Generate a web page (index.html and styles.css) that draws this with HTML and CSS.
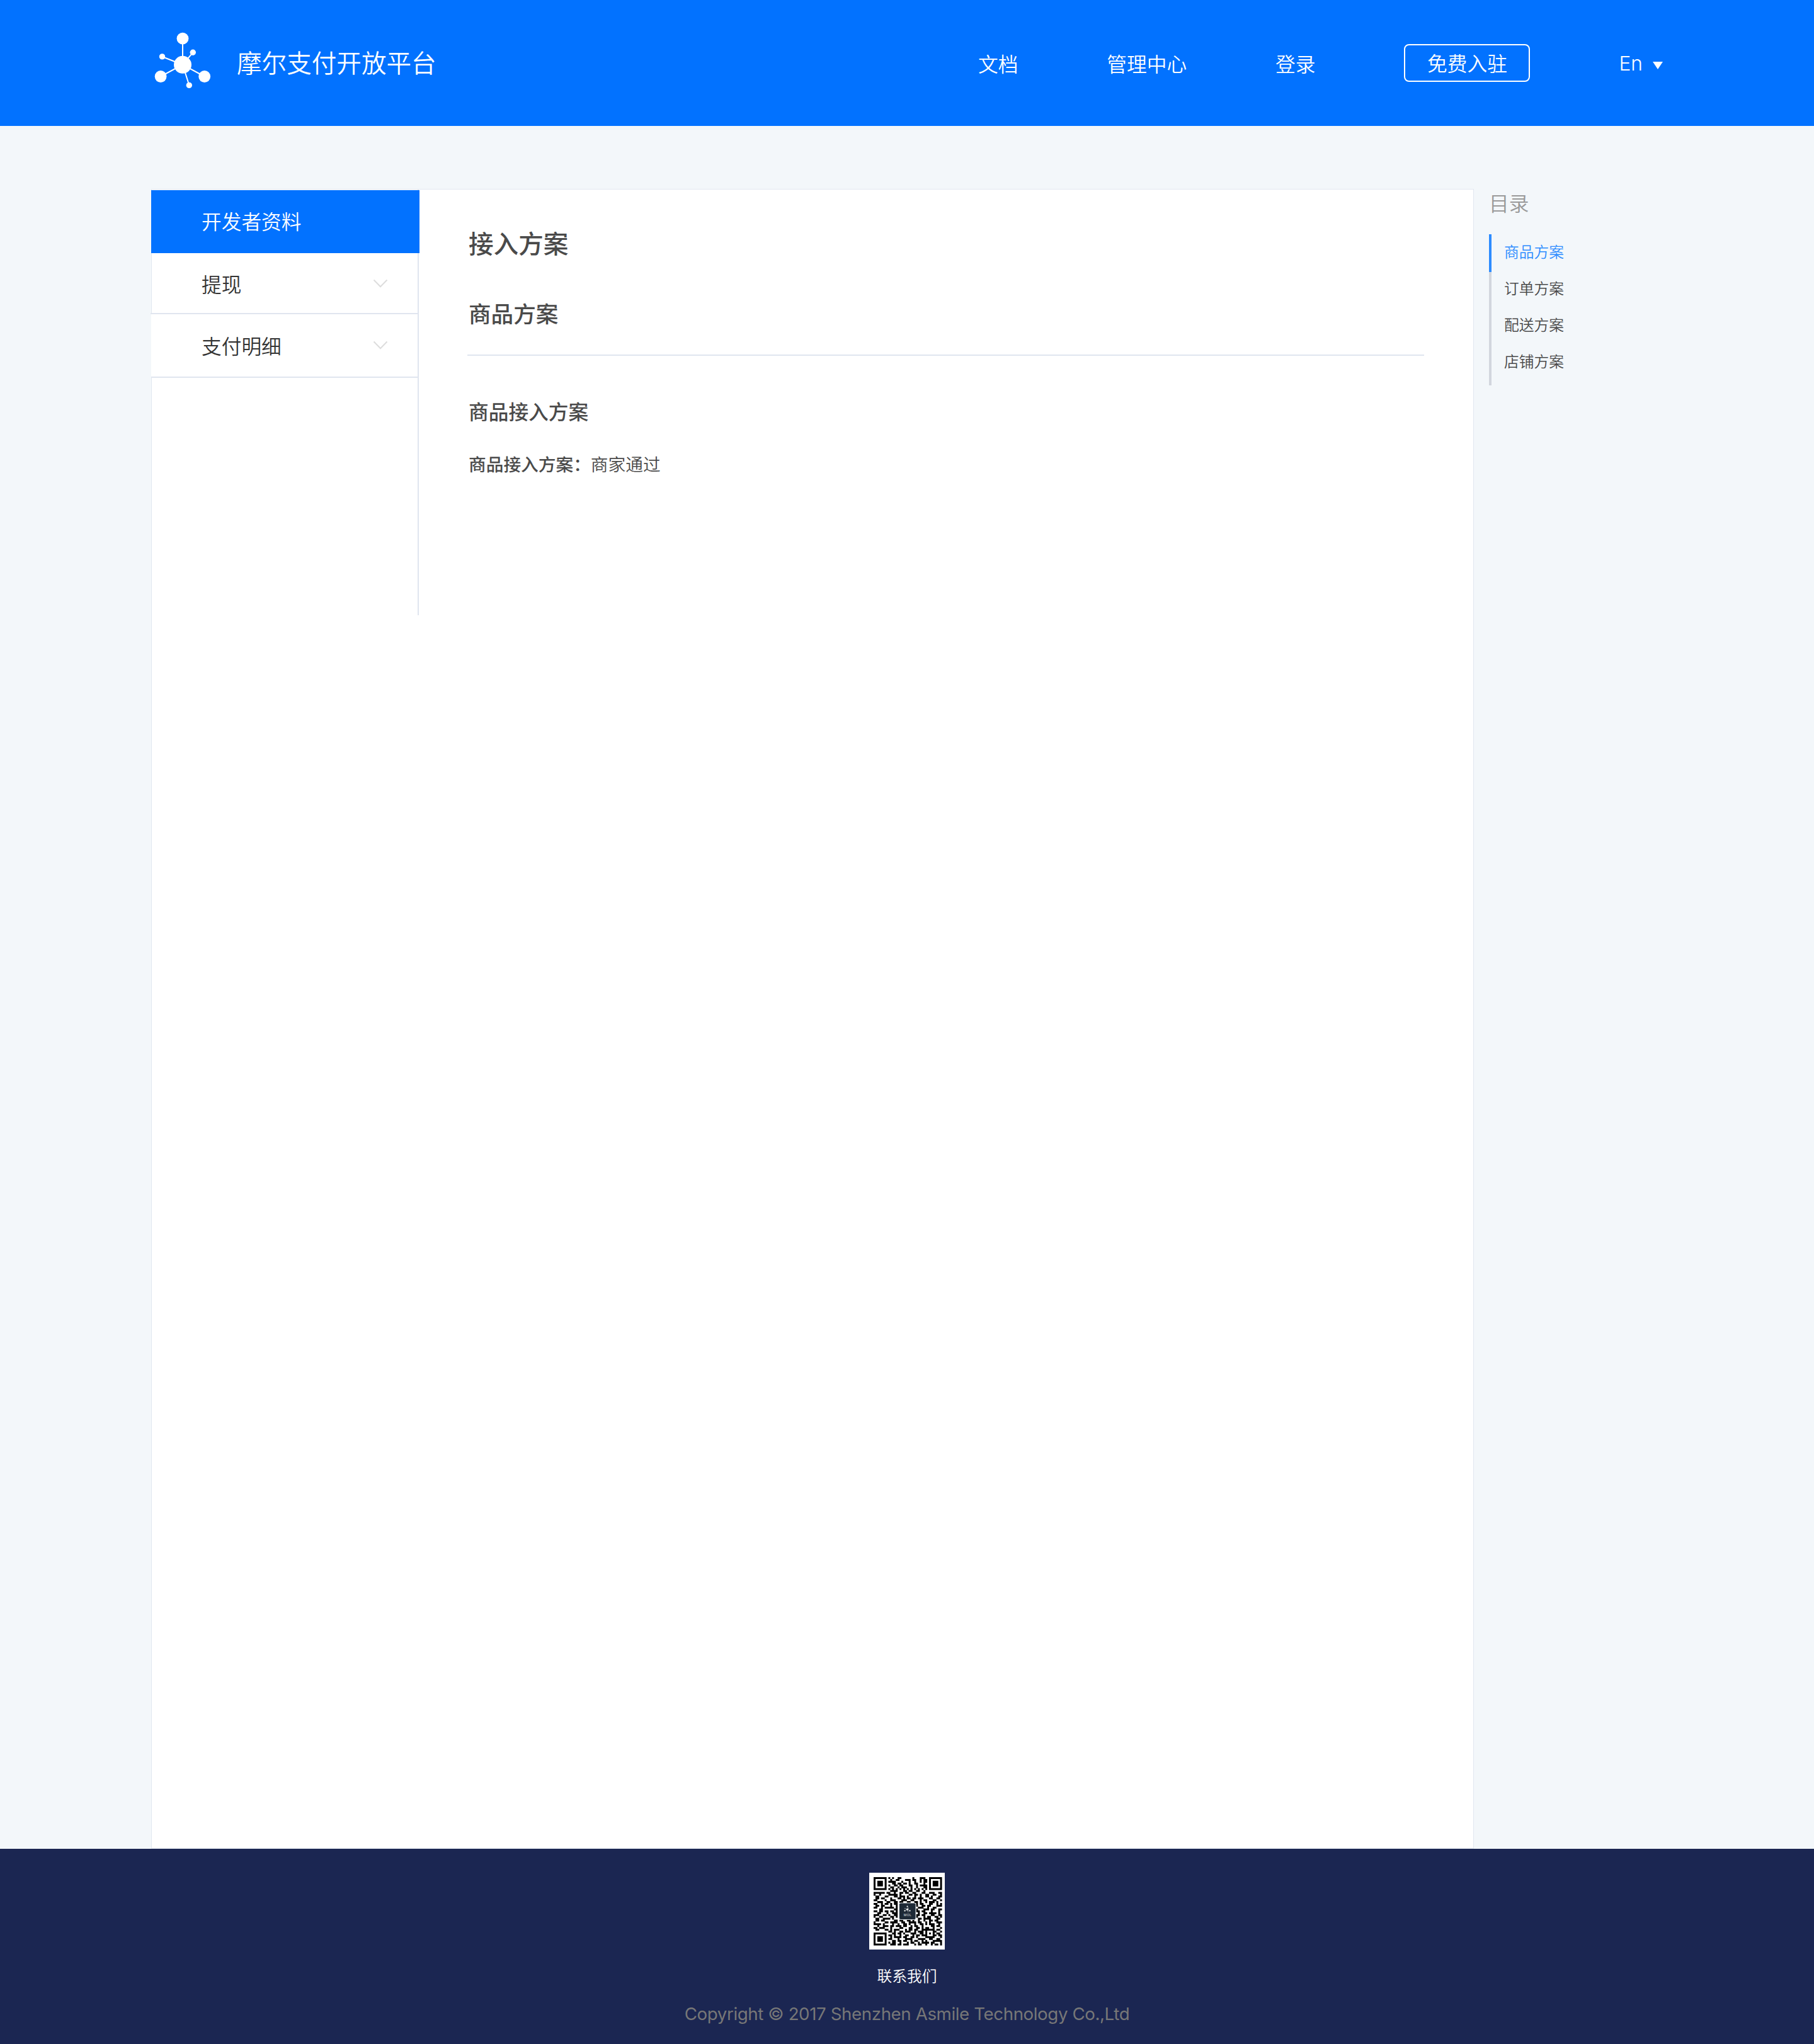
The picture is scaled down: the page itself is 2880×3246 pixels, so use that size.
FILE: index.html
```html
<!DOCTYPE html>
<html lang="zh-CN">
<head>
<meta charset="utf-8">
<title>摩尔支付开放平台</title>
<link rel="stylesheet" href="styles.css">
</head>
<body>
<header class="header">
  <a class="brand">
    <svg class="brand-logo" width="100" height="100" viewBox="0 0 100 100" fill="#fff" stroke="#fff" stroke-width="2">
      <g id="molecule"><path d="M50 52.7V11M50 52.7 17.5 40M50 52.7 66.3 33.3M50 52.7 15 71.5M50 52.7 84.7 71.5M50 52.7 60.3 85.3"/>
      <g stroke="none"><circle cx="50" cy="52.8" r="14"/><circle cx="50" cy="11.2" r="9.4"/><circle cx="17.5" cy="39.9" r="4.7"/><circle cx="66.3" cy="33.3" r="4.7"/><circle cx="15.1" cy="71.5" r="9.4"/><circle cx="84.7" cy="71.5" r="9.4"/><circle cx="60.3" cy="85.4" r="4.7"/></g></g>
    </svg>
    <span class="brand-name">摩尔支付开放平台</span>
  </a>
  <nav class="nav">
    <a>文档</a>
    <a>管理中心</a>
    <a>登录</a>
    <a class="join">免费入驻</a>
    <a class="lang">En<i class="caret"></i></a>
  </nav>
</header>
<main class="main">
  <div class="panel">
    <aside class="side">
      <div class="side-title">开发者资料</div>
      <div class="side-item">提现<svg class="chev" width="24" height="14" viewBox="0 0 24 14"><path d="M1.5 1.5 12 12.2 22.5 1.5"/></svg></div>
      <div class="side-item tall">支付明细<svg class="chev" width="24" height="14" viewBox="0 0 24 14"><path d="M1.5 1.5 12 12.2 22.5 1.5"/></svg></div>
    </aside>
    <article class="doc">
      <h1>接入方案</h1>
      <h2>商品方案</h2>
      <h3>商品接入方案</h3>
      <p><b>商品接入方案：</b>商家通过</p>
    </article>
  </div>
  <aside class="toc">
    <div class="toc-title">目录</div>
    <ul class="toc-list">
      <li class="active">商品方案</li>
      <li>订单方案</li>
      <li>配送方案</li>
      <li>店铺方案</li>
    </ul>
  </aside>
</main>
<footer class="footer">
  <svg class="qr" width="120" height="122" viewBox="0 0 120 122">
    <rect width="120" height="122" fill="#fff"/>
    <path id="modules" fill="#000" transform="translate(7 7) scale(2.932)"/>
    <rect x="47.5" y="48" width="26.5" height="26.5" rx="2.5" fill="#1d2936" stroke="#dfe4e6"/>
    <use href="#molecule" fill="#fff" stroke="#fff" stroke-width="3" transform="translate(54.8 52.2) scale(.115)"/>
    <text x="61" y="69" class="qr-label">MOL</text>
  </svg>
  <div class="contact">联系我们</div>
  <div class="copy">Copyright © 2017 Shenzhen Asmile Technology Co.,Ltd</div>
</footer>
<script src="qr.js"></script>
</body>
</html>
```
FILE: qr.js
```js
// One string per row of the code, "#" is a dark module.
const rows = [
  "#######.#.#..##......#...###..#######",
  "#.....#..#..##...###.##..#.##.#.....#",
  "#.###.#.####...#...#..#..#.##.#.###.#",
  "#.###.#...##.##.##.#..##...#..#.###.#",
  "#.###.#.#..##.##...##..#.####.#.###.#",
  "#.....#..##..#.###..#..#...##.#.....#",
  "#######.#.#.#.#.#.#.#.#.#.#.#.#######",
  ".........####...##.##..##..#.........",
  "######.##..#..##.##..##...##..###..##",
  "#..#....#####.#....##.##.#..##..##..#",
  ".##...##...##.###.#...#..#..##.#...##",
  ".##.##...#...##.#.##.##.###...##..##.",
  "##....#..###...###..##...#.##...##..#",
  "..###..##..##.##..##..##.#..#.###.#..",
  "##..#.##.#.##..........#.##...##..#.#",
  ".##.##...#..#..........#..##.##...###",
  "##..#.#####.#...........###..#..##...",
  "...##......##..........#...###.##..##",
  "##.##.##.##.#..........##.##...#...#.",
  "..##...#..###...........#..##.####.#.",
  "###..##.#..##..........##.##...##..##",
  "#..##....##.#..........#...#.##..##.#",
  ".##..####.#.............##.####...##.",
  ".##.##.....##.##..##.#..#..#..##.##..",
  "#.....##.####..##..####.##..#.#...###",
  "####.#....#..#..##.#..#..##.#.###..#.",
  "..#..###.##.###.##..#.##..#....##.##.",
  "##.###...#....##...##..##.#.##..#...#",
  ".##...##.#.###...#.##.##..#######.##.",
  "........##.#..##.###..#.###.#...##..#",
  "#######...##.##.#...###..##.#.#.#.##.",
  "#.....#.##.#..#..##..#.##.###...##.##",
  "#.###.#..#.####.##..##.#....#####...#",
  "#.###.#.##...#...####...####..##..##.",
  "#.###.#...##.##.##..#.##..#.#...#####",
  "#.....#.#.##..#...#.##..#.####.##...#",
  "#######..###.##.###...#.##..#..#.##.#"
];
document.getElementById("modules").setAttribute("d", rows.map((row, y) =>
  [...row].map((c, x) => c === "#" ? `M${x} ${y}h1.03v1.03h-1.03z` : "").join("")).join(""));
```
FILE: styles.css
```css
* { box-sizing: border-box; margin: 0; padding: 0; }
body { width: 2880px; background: #f3f7fa; font-family: "Noto Sans CJK SC", sans-serif; font-size: 31.7px; font-weight: 400; color: #333; }
.header { height: 200px; background: #0272ff; color: #fff; display: flex; justify-content: space-between; padding: 0 240px; }
.brand { display: flex; }
.brand-logo { margin-top: 50px; }
.brand-name { margin-left: 36px; font-size: 39.6px; line-height: 195px; font-weight: 350; }
.nav { display: flex; align-items: flex-start; line-height: 61px; padding-top: 70px; font-weight: 350; }
.nav a { margin-left: 141px; }
.nav .join { width: 200px; height: 60px; line-height: 54px; border: 2px solid #fff; border-radius: 8px; text-align: center; }
.lang { display: flex; align-items: center; font-family: Inter, sans-serif; line-height: 62px; }
.caret { margin: 5px 0 0 16px; border: 8px solid transparent; border-top: 12px solid #fff; border-bottom: 0; }
.main { display: flex; padding: 100px 0 0 240px; height: 2736px; }
.panel { width: 2100px; height: 2636px; background: #fff; border: 1px solid #e1e7f0; display: flex; }
.side { width: 425px; height: 676px; margin-left: -1px; border-right: 2px solid #e0e5ef; font-weight: 350; }
.side-title { width: 426px; height: 100px; margin-top: 1px; padding-left: 80px; background: #0272ff; color: #fff; line-height: 96px; }
.side-item { display: flex; justify-content: space-between; align-items: center; height: 97px; padding: 0 47px 0 81px; margin-left: -1px; border-bottom: 2px solid #e0e5ef; }
.side-item.tall { height: 101px; margin-left: 0; padding-left: 80px; padding-bottom: 1px; background: #fff; }
.chev { fill: none; stroke: #ddd; stroke-width: 2; }
.doc { flex: 1; padding: 0 78px; color: #4a4a4a; }
h1, h2, h3, b { font-weight: 500; }
h1, h2, h3, p { padding-left: 1px; }
h1 { font-size: 39.6px; line-height: 60px; margin-top: 54px; }
h2 { font-size: 35.6px; line-height: 60px; margin-top: 52px; margin-left: -1px; padding: 0 0 36px 2px; border-bottom: 2px solid #e0e5ef; }
h3 { font-size: 31.7px; line-height: 60px; margin-top: 57px; }
p { font-size: 27.7px; line-height: 60px; margin-top: 24px; font-weight: 350; }
.toc { margin-left: 24px; font-weight: 350; }
.toc-title { color: #999; line-height: 42px; height: 72px; }
.toc-list { list-style: none; height: 240px; border-left: 4px solid #d2d6de; font-size: 23.76px; color: #4a4a4a; }
.toc-list li { height: 58px; line-height: 53px; padding-left: 20px; }
.toc-list .active { height: 60px; margin: 0 0 -2px -4px; border-left: 4px solid #2d8cff; color: #2d8cff; }
.footer { height: 310px; background: #1b2652; display: flex; flex-direction: column; align-items: center; padding-top: 38px; }
.qr { display: block; }
.qr-label { font: 500 5px Inter, sans-serif; letter-spacing: .5px; text-anchor: middle; fill: #c8ced3; }
.contact { font-size: 23.76px; font-weight: 350; line-height: 40px; margin-top: 21px; color: #fff; }
.copy { font: 400 27.7px/40px Inter, sans-serif; letter-spacing: -.4px; color: #777; margin-top: 21px; }
```
